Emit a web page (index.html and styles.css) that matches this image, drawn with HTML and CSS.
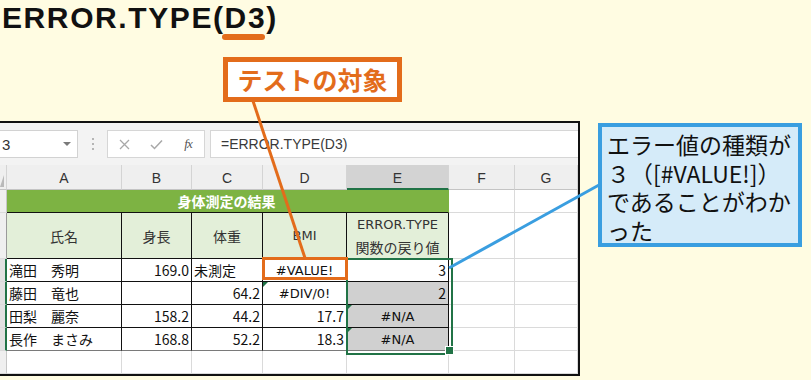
FILE: index.html
```html
<!DOCTYPE html>
<html lang="ja">
<head>
<meta charset="utf-8">
<title>ERROR.TYPE</title>
<link rel="stylesheet" href="styles.css">
</head>
<body>
<div class="page">
  <h1 class="title">ERROR.TYPE(D3)</h1>
  <div class="tag-row"><div class="tag">テストの対象</div></div>

  <div class="sheet">
    <div class="fbar">
      <div class="namebox"><span>3</span><span class="dd"></span></div>
      <div class="grip"><i></i><i></i><i></i></div>
      <div class="fbtns">
        <span class="fbtn"><svg width="11" height="11" viewBox="0 0 11 11"><path d="M1 1 L10 10 M10 1 L1 10" stroke="#a8a8a8" stroke-width="1.3" fill="none"/></svg></span>
        <span class="fbtn"><svg width="13" height="11" viewBox="0 0 13 11"><path d="M1 6 L4.5 9.5 L12 1.5" stroke="#a8a8a8" stroke-width="1.5" fill="none"/></svg></span>
        <span class="fbtn fx">fx</span>
      </div>
      <div class="finput">=ERROR.TYPE(D3)</div>
    </div>

    <div class="grid">
      <!-- column headers -->
      <div class="c ch corner"><span class="sel-all"></span></div>
      <div class="c ch">A</div>
      <div class="c ch">B</div>
      <div class="c ch">C</div>
      <div class="c ch">D</div>
      <div class="c ch ch-on">E</div>
      <div class="c ch">F</div>
      <div class="c ch">G</div>

      <!-- row 1 -->
      <div class="c rh"></div>
      <div class="c band">身体測定の結果</div>
      <div class="c"></div>
      <div class="c"></div>

      <!-- row 2 -->
      <div class="c rh rh-dark"></div>
      <div class="c t th">氏名</div>
      <div class="c t th">身長</div>
      <div class="c t th">体重</div>
      <div class="c t th lat">BMI</div>
      <div class="c t th th2"><span class="lat">ERROR.TYPE</span><span>関数の戻り値</span></div>
      <div class="c"></div>
      <div class="c"></div>

      <!-- row 3 -->
      <div class="c rh rh-on"></div>
      <div class="c t">滝田　秀明</div>
      <div class="c t num">169.0</div>
      <div class="c t">未測定</div>
      <div class="c t ctr lat target">#VALUE!</div>
      <div class="c t num sel">3</div>
      <div class="c"></div>
      <div class="c"></div>

      <!-- row 4 -->
      <div class="c rh rh-on"></div>
      <div class="c t">藤田　竜也</div>
      <div class="c t num"></div>
      <div class="c t num">64.2</div>
      <div class="c t ctr lat warn">#DIV/0!</div>
      <div class="c t num gray">2</div>
      <div class="c"></div>
      <div class="c"></div>

      <!-- row 5 -->
      <div class="c rh rh-on"></div>
      <div class="c t">田梨　麗奈</div>
      <div class="c t num">158.2</div>
      <div class="c t num">44.2</div>
      <div class="c t num">17.7</div>
      <div class="c t ctr lat gray warn">#N/A</div>
      <div class="c"></div>
      <div class="c"></div>

      <!-- row 6 -->
      <div class="c rh rh-on"></div>
      <div class="c t last">長作　まさみ</div>
      <div class="c t num last">168.8</div>
      <div class="c t num last">52.2</div>
      <div class="c t num last">18.3</div>
      <div class="c t ctr lat gray warn last">#N/A</div>
      <div class="c"></div>
      <div class="c"></div>

      <!-- row 7 -->
      <div class="c rh"></div>
      <div class="c"></div>
      <div class="c"></div>
      <div class="c"></div>
      <div class="c"></div>
      <div class="c"></div>
      <div class="c"></div>
      <div class="c"></div>
    </div>
  </div>

  <span class="uline"></span>

  <svg class="leaders" width="811" height="380" viewBox="0 0 811 380">
    <line x1="253" y1="101" x2="305" y2="258" stroke="#e36c1b" stroke-width="3"/>
    <line x1="449" y1="268" x2="599" y2="185" stroke="#3a9ee0" stroke-width="3"/>
  </svg>

  <div class="note">エラー値の種類が<br>３（[#VALUE!]）<br>であることがわか<br>った</div>
</div>
</body>
</html>
```

FILE: styles.css
```css
* { box-sizing: border-box; }

html, body { margin: 0; padding: 0; }

body {
  background: #fffce2;
  width: 811px;
  height: 380px;
  overflow: hidden;
  font-family: "Liberation Sans", "Noto Sans CJK JP", sans-serif;
}

.page {
  position: relative;
  width: 811px;
  height: 380px;
}

.title {
  margin: 0;
  padding: 3px 0 0 2px;
  height: 32px;
  font: 700 30px/29px "Liberation Sans", sans-serif;
  letter-spacing: 1.6px;
  color: #111;
}

.tag-row {
  display: flex;
  padding-left: 223px;
  margin-top: 25px;
}

.tag {
  position: relative;
  z-index: 5;
  width: 179px;
  height: 45px;
  border: 5px solid #e36c1b;
  background: #fff;
  color: #e36c1b;
  font: 700 25px/34px "Noto Sans CJK JP", sans-serif;
  text-align: center;
}

.sheet {
  margin-top: 19px;
  width: 580px;
  height: 255px;
  border: 2px solid #111;
  border-left: 0;
  background: #fff;
  overflow: hidden;
}

/* formula bar */
.fbar {
  height: 42px;
  background: #f3f3f3;
  display: flex;
  align-items: flex-start;
  padding-top: 7px;
}

.namebox {
  margin-left: -20px;
  width: 98px;
  height: 28px;
  background: #fff;
  border: 1px solid #d2d2d2;
  display: flex;
  align-items: center;
  padding-left: 21px;
  font: 15px "Liberation Sans", sans-serif;
  color: #333;
}

.dd {
  margin-left: auto;
  margin-right: 6px;
  width: 0;
  height: 0;
  border-left: 4px solid transparent;
  border-right: 4px solid transparent;
  border-top: 4px solid #7a7a7a;
}

.grip {
  width: 29px;
  height: 28px;
  display: flex;
  flex-direction: column;
  align-items: center;
  justify-content: center;
  gap: 3px;
}

.grip i {
  display: block;
  width: 2px;
  height: 2px;
  background: #b5b5b5;
}

.fbtns {
  width: 98px;
  height: 28px;
  background: #fff;
  border: 1px solid #d6d6d6;
  display: grid;
  grid-template-columns: 32px 32px 32px;
  align-items: center;
  justify-items: center;
}

.fbtn { display: flex; align-items: center; }

.fx {
  font: italic 13px "Liberation Serif", serif;
  color: #555;
  letter-spacing: -1px;
}

.finput {
  flex: 1;
  margin-left: 5px;
  height: 28px;
  background: #fff;
  border: 1px solid #d6d6d6;
  border-right: 0;
  padding-left: 10px;
  font: 14px/26px "Liberation Sans", sans-serif;
  color: #3a3a3a;
}

/* grid */
.grid {
  display: grid;
  grid-template-columns: 7px 115px 70px 71px 84px 102px 66px 63px;
  grid-template-rows: 25px 23px 46px 23px 23px 23px 23px 23px;
}

.c {
  border-right: 1px solid #dadada;
  border-bottom: 1px solid #dadada;
  display: flex;
  align-items: center;
  padding: 0 2px;
  white-space: nowrap;
  font: 14px "Noto Sans CJK JP", sans-serif;
  color: #111;
}

.ch {
  background: #efefef;
  border-right-color: #d4d4d4;
  border-bottom-color: #c4c4c4;
  justify-content: center;
  font: 14px "Liberation Sans", sans-serif;
  color: #333;
  padding: 2px 0 0;
}

.ch-on {
  background: #d3d3d3;
  border-bottom: 2px solid #217346;
}

.corner { position: relative; padding: 0; }

.sel-all {
  position: absolute;
  left: 0;
  bottom: 2px;
  width: 0;
  height: 0;
  border-bottom: 12px solid #b9b9b9;
  border-left: 4px solid transparent;
}

.rh {
  background: #efefef;
  border-right-color: #c6c6c6;
  border-bottom-color: #dadada;
  padding: 0;
}

.rh-dark { border-right-color: #9a9a9a; }

.rh-on {
  background: #e1e1e1;
  border-right: 2px solid #217346;
}

.band {
  grid-column: span 5;
  background: #7db343;
  border-right-color: #7db343;
  border-bottom-color: #111;
  justify-content: center;
  color: #fff;
  font-weight: 700;
  font-size: 14px;
  padding-left: 0;
}

.t {
  border-right-color: #111;
  border-bottom-color: #111;
}

.last { border-bottom-color: #7a7a7a; }

.th {
  background: #e3efd9;
  justify-content: center;
  color: #333;
}

.th2 {
  flex-direction: column;
  justify-content: center;
  line-height: 23px;
}

.lat {
  font-family: "DejaVu Sans", sans-serif;
  font-size: 13px;
}

.num { justify-content: flex-end; }

.ctr { justify-content: center; }

.gray { background: #d0d0d0; }

.warn { position: relative; }

.warn::before {
  content: "";
  position: absolute;
  top: 0;
  left: 0;
  border-top: 5px solid #1e7145;
  border-right: 5px solid transparent;
}

.target { position: relative; }

.target::after {
  content: "";
  position: absolute;
  top: -2px;
  left: -1px;
  right: -2px;
  bottom: 1px;
  border: 3px solid #e36c1b;
  z-index: 3;
}

.sel { position: relative; }

.sel::after {
  content: "";
  position: absolute;
  left: -1px;
  top: -1px;
  width: 103px;
  height: 93px;
  border: 2px solid #217346;
  z-index: 2;
}

.sel::before {
  content: "";
  position: absolute;
  left: 98px;
  top: 87px;
  width: 7px;
  height: 7px;
  background: #217346;
  border: 1px solid #fff;
  z-index: 3;
}

/* overlays */
.uline {
  position: absolute;
  left: 222px;
  top: 34px;
  width: 43px;
  height: 6px;
  border-radius: 3px;
  background: #e36c1b;
}

.leaders {
  position: absolute;
  left: 0;
  top: 0;
  z-index: 4;
  pointer-events: none;
}

.note {
  position: absolute;
  left: 598px;
  top: 123px;
  width: 204px;
  height: 124px;
  z-index: 5;
  border: 4px solid #3a9ee0;
  background: #d5ebf9;
  padding: 3px 0 0 5px;
  font: 400 23px/28.5px "Noto Sans CJK JP", sans-serif;
  color: #111;
  white-space: nowrap;
}
```
